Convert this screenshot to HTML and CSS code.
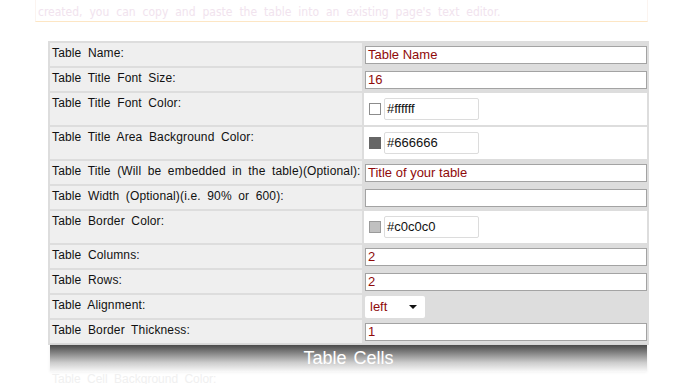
FILE: index.html
```html
<!DOCTYPE html>
<html>
<head>
<meta charset="utf-8">
<link rel="stylesheet" href="styles.css">
</head>
<body>
<div class="intro">
  <p class="intro-text">created, you can copy and paste the table into an existing page's text editor.</p>
</div>
<div class="form">
  <div class="lbl">Table Name:</div>
  <div class="val"><div class="txt red">Table Name</div></div>

  <div class="lbl">Table Title Font Size:</div>
  <div class="val"><div class="txt red">16</div></div>

  <div class="lbl tall">Table Title Font Color:</div>
  <div class="val white color"><span class="sw sw-white"></span><div class="cin">#ffffff</div></div>

  <div class="lbl tall">Table Title Area Background Color:</div>
  <div class="val white color"><span class="sw sw-dark"></span><div class="cin">#666666</div></div>

  <div class="lbl">Table Title (Will be embedded in the table)(Optional):</div>
  <div class="val"><div class="txt red">Title of your table</div></div>

  <div class="lbl">Table Width (Optional)(i.e. 90% or 600):</div>
  <div class="val"><div class="txt"></div></div>

  <div class="lbl tall">Table Border Color:</div>
  <div class="val white color"><span class="sw sw-silver"></span><div class="cin">#c0c0c0</div></div>

  <div class="lbl">Table Columns:</div>
  <div class="val"><div class="txt red">2</div></div>

  <div class="lbl">Table Rows:</div>
  <div class="val"><div class="txt red">2</div></div>

  <div class="lbl">Table Alignment:</div>
  <div class="val"><div class="sel red">left<span class="arrow"></span></div></div>

  <div class="lbl">Table Border Thickness:</div>
  <div class="val"><div class="txt red">1</div></div>
</div>
<div class="section">Table Cells</div>
<div class="faded">Table Cell Background Color:</div>
</body>
</html>
```
FILE: styles.css
```css
html, body {
  margin: 0;
  padding: 0;
  background: #ffffff;
  font-family: "Liberation Sans", Arial, sans-serif;
  overflow: hidden;
}
.intro {
  margin: 0 48px 0 35px;
  height: 21px;
  border-bottom: 1px solid #fde6c4;
  border-left: 1px solid #fbf4f0;
  border-right: 1px solid #fbf4f0;
}
.intro-text {
  margin: 0;
  padding: 5px 0 0 2px;
  font-family: "DejaVu Sans Condensed", "DejaVu Sans", sans-serif;
  font-size: 12px;
  word-spacing: 3.5px;
  color: #f1e3ee;
  white-space: nowrap;
}
.form {
  margin: 19px 0 0 48px;
  width: 597px;
  padding: 2px;
  display: grid;
  grid-template-columns: 312px 283px;
  column-gap: 2px;
  row-gap: 2px;
  background: #dddddd;
}
.lbl {
  background: #efefef;
  height: 23px;
  box-sizing: border-box;
  padding: 3px 0 0 2px;
  font-size: 12px;
  letter-spacing: 0.15px;
  word-spacing: 3px;
  color: #111;
  white-space: nowrap;
}
.lbl.tall { height: 32px; }
.val {
  display: flex;
  align-items: center;
  padding-left: 1px;
}
.val.white {
  background: #ffffff;
  padding-left: 5px;
}
.txt {
  width: 282px;
  height: 18px;
  box-sizing: border-box;
  border: 1px solid #a3a3a3;
  background: #fff;
  font-size: 13px;
  line-height: 16px;
  padding-left: 2px;
  color: #111;
}
.red { color: #8f0a0a; }
.sw {
  width: 12px;
  height: 12px;
  box-sizing: border-box;
  border: 1px solid #8c8c8c;
  margin-right: 3px;
}
.sw-white { background: #ffffff; }
.sw-dark { background: #666666; border-color: #666666; }
.sw-silver { background: #c0c0c0; border-color: #9a9a9a; }
.cin {
  width: 95px;
  height: 22px;
  box-sizing: border-box;
  border: 1px solid #dcdcdc;
  border-radius: 2px;
  font-size: 13px;
  line-height: 20px;
  padding-left: 2px;
  color: #111;
}
.sel {
  position: relative;
  width: 60px;
  height: 22px;
  box-sizing: border-box;
  background: #fff;
  border-radius: 2px;
  font-size: 13px;
  line-height: 22px;
  padding-left: 5px;
}
.arrow {
  position: absolute;
  right: 8px;
  top: 9px;
  width: 0;
  height: 0;
  border-left: 4px solid transparent;
  border-right: 4px solid transparent;
  border-top: 4px solid #111;
}
.section {
  margin: 0 0 0 50px;
  width: 597px;
  height: 27px;
  background: linear-gradient(to bottom, #4a4a4a 0%, #858585 30%, #cccccc 65%, #fafafa 100%);
  box-shadow: 0 0 3px rgba(0,0,0,0.08);
  color: #ffffff;
  text-align: center;
  font-size: 18px;
  line-height: 27px;
  word-spacing: 2px;
}
.faded {
  margin: 0 0 0 52px;
  font-size: 12px;
  line-height: 12px;
  padding-top: 1px;
  word-spacing: 3px;
  color: #f0f0f0;
  white-space: nowrap;
}
```
